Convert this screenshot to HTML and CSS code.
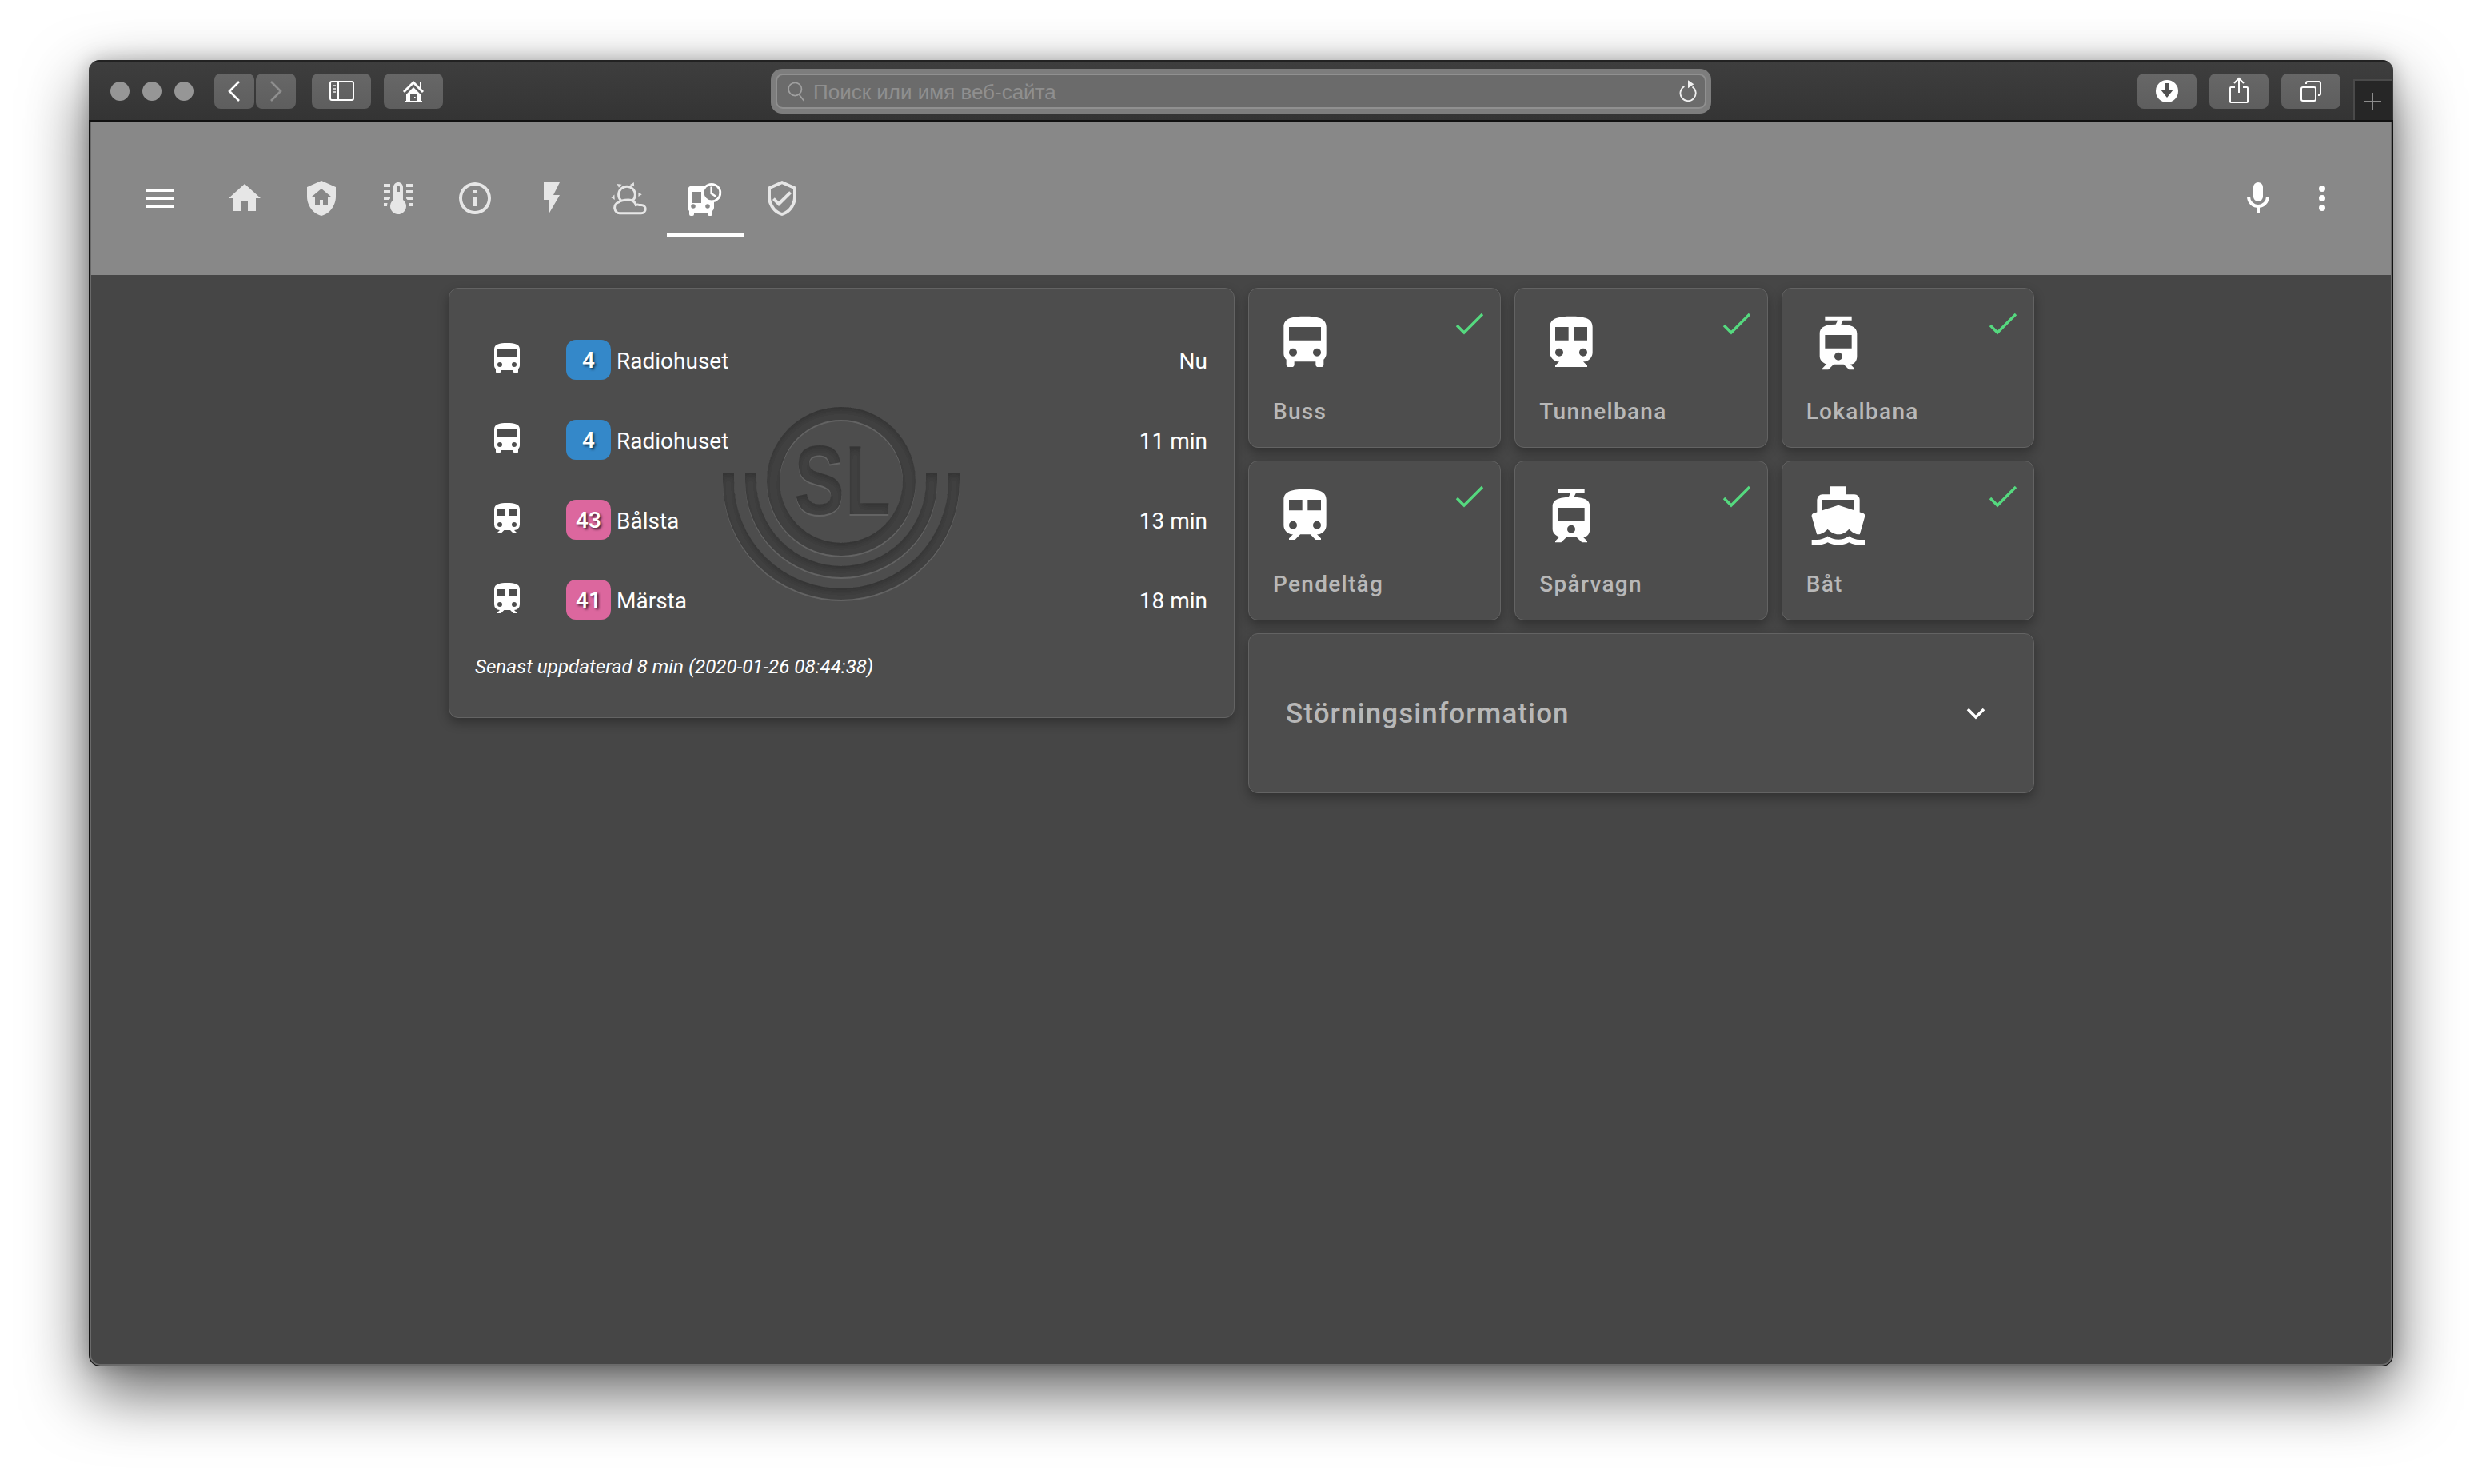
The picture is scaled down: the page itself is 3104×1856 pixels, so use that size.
FILE: index.html
```html
<!DOCTYPE html>
<html lang="sv">
<head>
<meta charset="utf-8">
<title>SL</title>
<link rel="stylesheet" href="styles.css">
</head>
<body>
<svg class="defs" width="0" height="0">
  <defs>
    <path id="i-bus" d="M18,11H6V6H18M16.5,17A1.5,1.5 0 0,1 15,15.5A1.5,1.5 0 0,1 16.5,14A1.5,1.5 0 0,1 18,15.5A1.5,1.5 0 0,1 16.5,17M7.5,17A1.5,1.5 0 0,1 6,15.5A1.5,1.5 0 0,1 7.5,14A1.5,1.5 0 0,1 9,15.5A1.5,1.5 0 0,1 7.5,17M4,16C4,16.88 4.39,17.67 5,18.22V20A1,1 0 0,0 6,21H7A1,1 0 0,0 8,20V19H16V20A1,1 0 0,0 17,21H18A1,1 0 0,0 19,20V18.22C19.61,17.67 20,16.88 20,16V6C20,2.5 16.42,2 12,2C7.58,2 4,2.5 4,6V16Z"/>
    <path id="i-train" d="M12,2C8,2 4,2.5 4,6V15.5A3.5,3.5 0 0,0 7.5,19L6,20.5V21H8.23L10.23,19H14L16,21H18V20.5L16.5,19A3.5,3.5 0 0,0 20,15.5V6C20,2.5 16.42,2 12,2M7.5,17A1.5,1.5 0 0,1 6,15.5A1.5,1.5 0 0,1 7.5,14A1.5,1.5 0 0,1 9,15.5A1.5,1.5 0 0,1 7.5,17M11,10H6V6H11V10M13,10V6H18V10H13M16.5,17A1.5,1.5 0 0,1 15,15.5A1.5,1.5 0 0,1 16.5,14A1.5,1.5 0 0,1 18,15.5A1.5,1.5 0 0,1 16.5,17Z"/>
    <path id="i-subway" d="M18,11H13V6H18M16.5,17A1.5,1.5 0 0,1 15,15.5A1.5,1.5 0 0,1 16.5,14A1.5,1.5 0 0,1 18,15.5A1.5,1.5 0 0,1 16.5,17M11,11H6V6H11M7.5,17A1.5,1.5 0 0,1 6,15.5A1.5,1.5 0 0,1 7.5,14A1.5,1.5 0 0,1 9,15.5A1.5,1.5 0 0,1 7.5,17M12,2C7.58,2 4,2.5 4,6V15.5A3.5,3.5 0 0,0 7.5,19L6,20.5V21H18V20.5L16.5,19A3.5,3.5 0 0,0 20,15.5V6C20,2.5 16.42,2 12,2Z"/>
    <path id="i-tram" d="M19,16.94V8.5C19,5.71 16.39,5.1 13,5L13.75,3.5H17V2H7V3.5H11.75L11,5C7.86,5.11 5,5.73 5,8.5V16.94C5,18.39 6.19,19.6 7.59,19.91L6,21.5V22H8.23L10.23,20H14L16,22H18V21.5L16.5,20H16.42C18.11,20 19,18.63 19,16.94M12,18.5A1.5,1.5 0 0,1 10.5,17A1.5,1.5 0 0,1 12,15.5A1.5,1.5 0 0,1 13.5,17A1.5,1.5 0 0,1 12,18.5M17,14H7V9H17V14Z"/>
    <path id="i-ferry" d="M6,6H18V9.96L12,8L6,9.96M3.94,19H4C5.6,19 7,18.12 8,17C9,18.12 10.4,19 12,19C13.6,19 15,18.12 16,17C17,18.12 18.4,19 20,19H20.05L21.95,12.31C22.03,12.05 22,11.77 21.88,11.53C21.75,11.29 21.53,11.11 21.26,11.03L20,10.62V6C20,4.89 19.1,4 18,4H15V1H9V4H6A2,2 0 0,0 4,6V10.62L2.71,11.03C2.45,11.11 2.23,11.29 2.1,11.53C1.97,11.77 1.95,12.05 2.03,12.31M20,21C18.61,21 17.22,20.53 16,19.67C13.56,21.38 10.44,21.38 8,19.67C6.78,20.53 5.39,21 4,21H2V23H4C5.37,23 6.74,22.65 8,22C10.5,23.3 13.5,23.3 16,22C17.26,22.65 18.63,23 20,23H22V21H20Z"/>
    <filter id="deboss" x="-10%" y="-10%" width="120%" height="120%">
      <feFlood flood-color="#646464" result="lightColor"/>
      <feComposite in="lightColor" in2="SourceAlpha" operator="in"/>
      <feOffset dy="2" result="light"/>
      <feOffset in="SourceAlpha" dy="5"/>
      <feGaussianBlur stdDeviation="4" result="off"/>
      <feFlood flood-color="#000" flood-opacity=".38"/>
      <feComposite in2="off" operator="out" result="shade"/>
      <feComposite in="shade" in2="SourceAlpha" operator="in" result="inner"/>
      <feMerge>
        <feMergeNode in="light"/>
        <feMergeNode in="SourceGraphic"/>
        <feMergeNode in="inner"/>
      </feMerge>
    </filter>
  </defs>
</svg>

<div class="window">
  <div class="toolbar">
    <div class="lights"><span class="light"></span><span class="light"></span><span class="light"></span></div>
    <div class="nav-pair">
      <button class="tbtn tbtn-nav"><svg class="chrome" viewBox="0 0 50 44"><path d="M31 10L19 22L31 34" class="line"/></svg></button>
      <button class="tbtn tbtn-nav"><svg class="chrome" viewBox="0 0 50 44"><path d="M19 10L31 22L19 34" class="line dim"/></svg></button>
    </div>
    <button class="tbtn tbtn-wide"><svg class="chrome" viewBox="0 0 74 44"><rect x="23" y="10" width="29" height="23" rx="2" class="line"/><path d="M33 10V33" class="line"/><path d="M26 15H30M26 19H30M26 23H30" class="line thin"/></svg></button>
    <button class="tbtn tbtn-wide"><svg class="chrome" viewBox="0 0 74 44"><path d="M45 11H47V19H45Z" class="solid"/><path d="M25 23L37 11L49 23" class="line roof"/><path d="M28 26L37 17L46 26V34H48V36H26V34H28Z" class="solid"/><rect x="33" y="25" width="9" height="9" fill="#606060"/><rect x="38" y="29" width="1.6" height="1.6" fill="#fff"/></svg></button>
    <div class="address">
      <div class="address-inner">
        <svg class="search-icon" viewBox="0 0 28 30"><circle cx="12" cy="12" r="9.5"/><path d="M18 20L25 29"/></svg>
        <span class="address-text">Поиск или имя веб-сайта</span>
        <svg class="reload-icon" viewBox="0 0 24 32"><path d="M7 9.5A10.5 10.5 0 1 0 18 10"/><path d="M12 1L20 6.5L12 12Z" class="reload-head"/></svg>
      </div>
    </div>
    <div class="tools">
      <button class="tbtn tbtn-tool"><svg class="chrome" viewBox="0 0 74 44"><circle cx="37" cy="22" r="14" fill="#fff"/><path d="M35 12H39V20H45L37 30L29 20H35Z" fill="#505050"/></svg></button>
      <button class="tbtn tbtn-tool"><svg class="chrome" viewBox="0 0 74 44"><path d="M32 17H27A1 1 0 0 0 26 18V35A1 1 0 0 0 27 36H47A1 1 0 0 0 48 35V18A1 1 0 0 0 47 17H42M37 24V7M31 12L37 6L43 12" class="line"/></svg></button>
      <button class="tbtn tbtn-tool"><svg class="chrome" viewBox="0 0 74 44"><rect x="25" y="17" width="18" height="17" rx="2" class="line"/><path d="M31 13V12A2 2 0 0 1 33 10H47A2 2 0 0 1 49 12V25A2 2 0 0 1 47 27H46" class="line"/></svg></button>
    </div>
    <div class="plus-tab"><svg class="plus" viewBox="0 0 24 24"><path d="M1 12H23M12 1V23"/></svg></div>
  </div>

  <header class="header">
    <svg class="ico ico-white menu" viewBox="0 0 24 24"><path d="M3,6H21V8H3V6M3,11H21V13H3V11M3,16H21V18H3V16Z"/></svg>
    <nav class="tabs">
      <a class="tab"><svg class="ico" viewBox="0 0 24 24"><path d="M10,20V14H14V20H19V12H22L12,3L2,12H5V20H10Z"/></svg></a>
      <a class="tab"><svg class="ico ico-evenodd" viewBox="0 0 24 24"><path d="M11 13H13V16H16V11H18L12 6L6 11H8V16H11V13M12 1L3 5V11C3 16.55 6.84 21.74 12 23C17.16 21.74 21 16.55 21 11V5L12 1Z"/></svg></a>
      <a class="tab"><svg class="ico" viewBox="0 0 24 24"><path d="M17 3H21V5H17V3M17 7H21V9H17V7M17 11H21V13H17.75L17 12.1V11M21 15V17H19C19 16.31 18.9 15.63 18.71 15H21M7 3V5H3V3H7M7 7V9H3V7H7M7 11V12.1L6.25 13H3V11H7M3 15H5.29C5.1 15.63 5 16.31 5 17H3V15M15 13V5C15 3.34 13.66 2 12 2S9 3.34 9 5V13C6.79 14.66 6.34 17.79 8 20S12.79 22.66 15 21 17.66 16.21 16 14C15.72 13.62 15.38 13.28 15 13M12 4C12.55 4 13 4.45 13 5V8H11V5C11 4.45 11.45 4 12 4Z"/></svg></a>
      <a class="tab"><svg class="ico" viewBox="0 0 24 24"><path d="M11,9H13V7H11M12,20C7.59,20 4,16.41 4,12C4,7.59 7.59,4 12,4C16.41,4 20,7.59 20,12C20,16.41 16.41,20 12,20M12,2A10,10 0 0,0 2,12A10,10 0 0,0 12,22A10,10 0 0,0 22,12A10,10 0 0,0 12,2M11,17H13V11H11V17Z"/></svg></a>
      <a class="tab"><svg class="ico" viewBox="0 0 24 24"><path d="M7,2V13H10V22L17,10H13L17,2H7Z"/></svg></a>
      <a class="tab"><svg class="ico" viewBox="0 0 24 24"><circle cx="11" cy="9.8" r="5.2" class="wx"/><path d="M6.5 21.4A3.5 3.5 0 0 1 5.7 14.6C7 13.4 10 13 12 13C14.6 13 16 14.2 16.6 16.2C17.2 16 18 16 18.6 16.2H20A2.6 2.6 0 0 1 20 21.4Z" class="wx"/><path d="M4.8 3L7.8 3.4L6 5.4ZM12.8 3.6L15.4 2L15.6 4.6ZM1.2 11.6L3.2 9.8L3.4 13ZM20.4 9.6L18.2 8.4L18.2 11Z" class="wx-ray"/></svg></a>
      <a class="tab tab-active"><svg class="ico ico-white ico-evenodd" viewBox="0 0 24 24"><path d="M1 7A3 3 0 0 1 4 4H14A3 3 0 0 1 17.5 7V18A3 3 0 0 1 16.5 20V22A1 1 0 0 1 15.5 23H14.5A1 1 0 0 1 13.5 22V21H5V22A1 1 0 0 1 4 23H3A1 1 0 0 1 2 22V20A3 3 0 0 1 1 18ZM3.5 8V15H9.5V8ZM4.5 15.6A1.4 1.4 0 1 0 4.5 18.4A1.4 1.4 0 1 0 4.5 15.6ZM13.5 15.6A1.4 1.4 0 1 0 13.5 18.4A1.4 1.4 0 1 0 13.5 15.6Z"/><circle cx="16" cy="8.6" r="5.4" class="clock"/><path d="M15.8 4.8V9L18.8 11" class="clock-hand"/></svg></a>
      <a class="tab"><svg class="ico" viewBox="0 0 24 24"><path d="M21,11C21,16.55 17.16,21.74 12,23C6.84,21.74 3,16.55 3,11V5L12,1L21,5V11M12,21C15.75,20 19,15.54 19,11.22V6.3L12,3.18L5,6.3V11.22C5,15.54 8.25,20 12,21M10,17L6,13L7.41,11.59L10,14.17L16.59,7.58L18,9"/></svg></a>
    </nav>
    <div class="actions">
      <svg class="ico ico-white" viewBox="0 0 24 24"><path d="M12,2A3,3 0 0,1 15,5V11A3,3 0 0,1 12,14A3,3 0 0,1 9,11V5A3,3 0 0,1 12,2M19,11C19,14.53 16.39,17.44 13,17.93V21H11V17.93C7.61,17.44 5,14.53 5,11H7A5,5 0 0,0 12,16A5,5 0 0,0 17,11H19Z"/></svg>
      <svg class="ico ico-white" viewBox="0 0 24 24"><path d="M12,16A2,2 0 0,1 14,18A2,2 0 0,1 12,20A2,2 0 0,1 10,18A2,2 0 0,1 12,16M12,10A2,2 0 0,1 14,12A2,2 0 0,1 12,14A2,2 0 0,1 10,12A2,2 0 0,1 12,10M12,4A2,2 0 0,1 14,6A2,2 0 0,1 12,8A2,2 0 0,1 10,6A2,2 0 0,1 12,4Z"/></svg>
    </div>
  </header>

  <main class="content">
    <section class="card departures">
      <svg class="sl-logo" viewBox="0 0 300 250" width="300" height="250">
        <g filter="url(#deboss)">
          <circle cx="147" cy="93" r="85" class="sl-ring sl-ring-a"/>
          <path d="M34 82V93A113 113 0 0 0 260 93V82" class="sl-ring sl-ring-b"/>
          <path d="M6 82V93A141 141 0 0 0 288 93V82" class="sl-ring sl-ring-b"/>
          <text x="88" y="134" class="sl-text" textLength="121" lengthAdjust="spacingAndGlyphs">SL</text>
        </g>
      </svg>
      <div class="dep-row"><svg class="dep-icon" viewBox="0 0 24 24"><use href="#i-bus"/></svg><span class="badge badge-blue">4</span><span class="dep-name">Radiohuset</span><span class="dep-time">Nu</span></div>
      <div class="dep-row"><svg class="dep-icon" viewBox="0 0 24 24"><use href="#i-bus"/></svg><span class="badge badge-blue">4</span><span class="dep-name">Radiohuset</span><span class="dep-time">11 min</span></div>
      <div class="dep-row"><svg class="dep-icon" viewBox="0 0 24 24"><use href="#i-train"/></svg><span class="badge badge-pink">43</span><span class="dep-name">Bålsta</span><span class="dep-time">13 min</span></div>
      <div class="dep-row"><svg class="dep-icon" viewBox="0 0 24 24"><use href="#i-train"/></svg><span class="badge badge-pink">41</span><span class="dep-name">Märsta</span><span class="dep-time">18 min</span></div>
      <p class="updated">Senast uppdaterad 8 min (2020-01-26 08:44:38)</p>
    </section>

    <section class="mode-grid">
      <div class="card mode"><svg class="mode-icon" viewBox="0 0 24 24"><use href="#i-bus"/></svg><svg class="check" viewBox="0 0 36 28"><path d="M2 16L11 25L34 2"/></svg><span class="mode-name">Buss</span></div>
      <div class="card mode"><svg class="mode-icon" viewBox="0 0 24 24"><use href="#i-subway"/></svg><svg class="check" viewBox="0 0 36 28"><path d="M2 16L11 25L34 2"/></svg><span class="mode-name">Tunnelbana</span></div>
      <div class="card mode"><svg class="mode-icon" viewBox="0 0 24 24"><use href="#i-tram"/></svg><svg class="check" viewBox="0 0 36 28"><path d="M2 16L11 25L34 2"/></svg><span class="mode-name">Lokalbana</span></div>
      <div class="card mode"><svg class="mode-icon" viewBox="0 0 24 24"><use href="#i-train"/></svg><svg class="check" viewBox="0 0 36 28"><path d="M2 16L11 25L34 2"/></svg><span class="mode-name">Pendeltåg</span></div>
      <div class="card mode"><svg class="mode-icon" viewBox="0 0 24 24"><use href="#i-tram"/></svg><svg class="check" viewBox="0 0 36 28"><path d="M2 16L11 25L34 2"/></svg><span class="mode-name">Spårvagn</span></div>
      <div class="card mode"><svg class="mode-icon" viewBox="0 0 24 24"><use href="#i-ferry"/></svg><svg class="check" viewBox="0 0 36 28"><path d="M2 16L11 25L34 2"/></svg><span class="mode-name">Båt</span></div>
      <div class="card disruption"><span class="disruption-title">Störningsinformation</span><svg class="chevron" viewBox="0 0 24 16"><path d="M2 3L12 13L22 3"/></svg></div>
    </section>
  </main>
</div>
</body>
</html>
```
FILE: styles.css
```css
* { box-sizing: border-box; }
html, body { margin: 0; padding: 0; background: #fff; }
body { width: 3104px; height: 1856px; overflow: hidden; font-family: Roboto, "Liberation Sans", sans-serif; }
.defs { position: absolute; }

.window {
  position: relative;
  margin: 75px 0 0 111px;
  width: 2882px;
  height: 1634px;
  display: flex;
  flex-direction: column;
  background: #464646;
  border-radius: 14px;
  overflow: hidden;
  box-shadow: 0 32px 80px rgba(0,0,0,.62), 0 0 24px rgba(0,0,0,.22);
}
.window::after {
  content: "";
  position: absolute;
  inset: 0;
  border-radius: 14px;
  border: 1px solid #111;
  box-shadow: inset 0 0 0 2px #6a6a6a;
  clip-path: inset(77px 0 0 0);
  pointer-events: none;
}

/* browser toolbar */
.toolbar {
  height: 77px;
  flex: none;
  display: flex;
  align-items: center;
  padding: 0 0 0 27px;
  background: linear-gradient(#3e3e3e, #343434);
  border-top: 2px solid #222;
  border-bottom: 2px solid #111;
  position: relative;
}
.lights { display: flex; gap: 16px; margin-right: 26px; }
.light { width: 24px; height: 24px; border-radius: 50%; background: #969696; }
.nav-pair { display: flex; gap: 2px; margin-right: 20px; }
.tbtn {
  display: block;
  padding: 0;
  height: 44px;
  border: 0;
  border-radius: 8px;
  background: linear-gradient(#676767, #5e5e5e);
}
.tbtn-nav { width: 50px; }
.tbtn-wide { width: 74px; margin-right: 16px; }
.tbtn-tool { width: 74px; }
.chrome { display: block; width: 100%; height: 100%; }
.line { fill: none; stroke: #fff; stroke-width: 2; }
.tbtn-nav .line { stroke-width: 2.6; }
.line.dim { stroke: #8e8e8e; }
.line.thin { stroke: #ccc; stroke-width: 2; }
.line.roof { stroke-width: 3; }
.solid { fill: #fff; }

.address {
  width: 1176px;
  height: 56px;
  margin-left: 394px;
  padding: 6px;
  border-radius: 14px;
  background: #7d7d7d;
}
.address-inner {
  height: 100%;
  display: flex;
  align-items: center;
  gap: 9px;
  padding: 0 10px 0 12px;
  border: 2px solid #909090;
  border-radius: 9px;
  background: #6b6b6b;
}
.search-icon { width: 24px; height: 26px; flex: none; fill: none; stroke: #a0a0a0; stroke-width: 2; }
.address-text { flex: 1; padding-top: 4px; font-family: "Liberation Sans", sans-serif; font-size: 26px; color: #8f8f8f; }
.reload-icon { width: 22px; height: 30px; flex: none; fill: none; stroke: #f0f0f0; stroke-width: 2; }
.reload-head { fill: #f0f0f0; stroke: none; }

.tools { display: flex; gap: 16px; margin-left: 533px; }
.plus-tab {
  align-self: flex-end;
  width: 49px;
  height: 51px;
  margin-left: 16px;
  display: flex;
  align-items: center;
  justify-content: center;
  padding: 2px 3px 0 0;
  background: #262626;
  border-top: 2px solid #4a4a4a;
  border-left: 2px solid #4a4a4a;
}
.plus { width: 24px; height: 24px; fill: none; stroke: #8c8c8c; stroke-width: 2; }

/* app header */
.header {
  height: 192px;
  flex: none;
  display: flex;
  align-items: center;
  padding: 0 65px;
  background: #888;
}
.ico { width: 48px; height: 48px; flex: none; fill: #e6e6e6; display: block; }
.ico-white { fill: #fff; }
.ico-evenodd { fill-rule: evenodd; }
.menu { margin-right: 34px; }
.tabs { display: flex; flex: 1; }
.tab {
  width: 96px;
  height: 96px;
  display: flex;
  align-items: center;
  justify-content: center;
  border-bottom: 4px solid transparent;
  padding-top: 4px;
}
.tab-active { border-bottom-color: #fff; }
.wx { fill: #888; stroke: #e6e6e6; stroke-width: 1.5; }
.wx-ray { fill: #e0e0e0; }
.clock { fill: #888; stroke: #fff; stroke-width: 1.4; }
.clock-hand { fill: none; stroke: #fff; stroke-width: 1.2; }
.actions { display: flex; gap: 32px; }

/* content */
.content {
  display: grid;
  grid-template-columns: 983px 983px;
  justify-content: center;
  column-gap: 17px;
  align-items: start;
  padding: 16px 0 0 1px;
}
.card {
  position: relative;
  background: #4d4d4d;
  border: 1px solid #636363;
  border-radius: 12px;
  box-shadow: 0 6px 14px rgba(0,0,0,.3);
}

.departures { height: 538px; padding: 39px 33px 0 48px; color: #fff; }
.sl-logo { position: absolute; left: 343px; top: 148px; overflow: visible; }
.sl-ring { fill: none; stroke: #434343; }
.sl-ring-a { stroke-width: 16; }
.sl-ring-b { stroke-width: 14; }
.sl-text { font-family: "Liberation Sans", sans-serif; font-weight: 700; font-size: 122px; fill: #434343; }
.dep-row { position: relative; height: 100px; display: flex; align-items: center; font-size: 28px; }
.dep-icon { width: 48px; height: 48px; fill: #fff; margin-right: 50px; margin-top: -2px; flex: none; }
.badge {
  width: 56px;
  height: 50px;
  flex: none;
  display: flex;
  align-items: center;
  justify-content: center;
  border-radius: 12px;
  font-weight: 500;
  text-shadow: 2px 2px 3px rgba(0,0,0,.7);
}
.badge-blue { background: #3488c9; }
.badge-pink { background: #dc679e; }
.dep-name { margin-left: 7px; flex: 1; padding-top: 2px; }
.dep-time { text-align: right; padding-top: 2px; }
.updated {
  position: relative;
  margin: 16px 0 0 -16px;
  font-size: 24.2px;
  line-height: 36px;
  font-style: italic;
}

.mode-grid {
  display: grid;
  grid-template-columns: repeat(3, 1fr);
  grid-auto-rows: 200px;
  gap: 16px 17px;
}
.mode { padding: 28px 30px 0; }
.mode-icon { display: block; width: 80px; height: 80px; fill: #fff; }
.check {
  position: absolute;
  top: 30px;
  right: 20px;
  width: 36px;
  height: 28px;
  fill: none;
  stroke: #55d97f;
  stroke-width: 3.4;
}
.mode-name {
  display: block;
  margin-top: 29px;
  font-size: 28px;
  font-weight: 500;
  line-height: 34px;
  letter-spacing: 1.3px;
  color: #b8b8b8;
}
.disruption {
  grid-column: 1 / -1;
  display: flex;
  align-items: center;
  justify-content: space-between;
  padding: 0 60px 0 46px;
}
.disruption-title { font-size: 35px; font-weight: 500; letter-spacing: 1.1px; color: #b8b8b8; }
.chevron { width: 24px; height: 16px; fill: none; stroke: #fff; stroke-width: 3.6; }
```
